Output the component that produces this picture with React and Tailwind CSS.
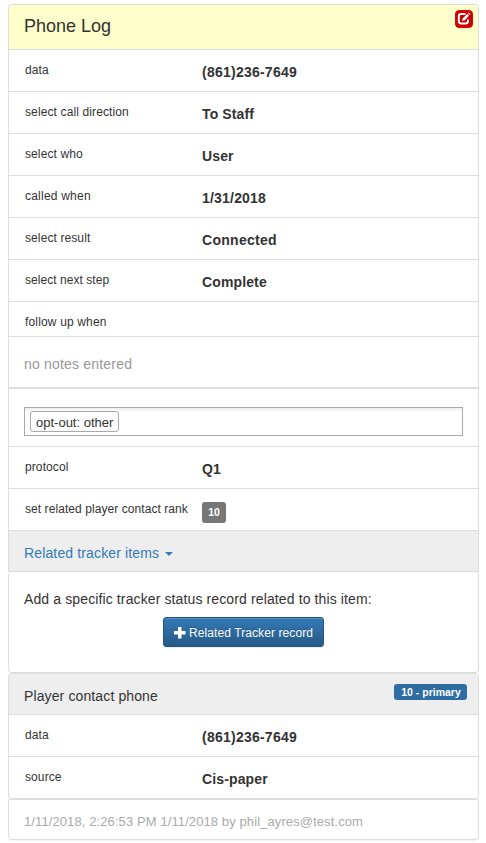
import React from "react";

function Label({ children, spacing }) {
  return (
    <div className="w-[177px] shrink-0 whitespace-nowrap pt-[12px] text-[12px] leading-[17px]">
      <span className={spacing}>{children}</span>
    </div>
  );
}

function Row({ label, value, labelSpacing = "tracking-[0.1px]", valueSpacing = "tracking-[0.13px]", last, children }) {
  return (
    <div className={"flex h-[42px] border-b border-[#ddd] pl-[16px] " + (last ? "rounded-b-[4px]" : "")}>
      <Label spacing={labelSpacing}>{label}</Label>
      {children || (
        <div className="pt-[12px] text-[14px] font-bold leading-[20px]">
          <span className={valueSpacing}>{value}</span>
        </div>
      )}
    </div>
  );
}

function EditIcon() {
  return (
    <svg className="h-[16px] w-[16px]" viewBox="1 1 16 16" fill="none">
      <path d="M10.500 4H6.200A2.400 2.400 0 0 0 3.800 6.400V11A2.400 2.400 0 0 0 6.200 13.400H10.600A2.400 2.400 0 0 0 13 11V9.500" stroke="#fff" strokeWidth="2" />
      <path d="M7.200 11L7.900 8.300L12.200 4L14 5.800L9.700 10.200Z" fill="#fff" />
      <path d="M12.900 3.300L13.700 2.500L15.500 4.200L14.700 5Z" fill="#fff" />
    </svg>
  );
}

export default function App() {
  return (
    <div className="h-[843px] w-[486px] bg-white pl-[8px] pt-[4px] font-['Liberation_Sans',Arial,sans-serif] text-[#333]">
      <div className="w-[471px] rounded-[4px] shadow-[0_1px_1px_rgba(0,0,0,0.05)]">
        <div className="rounded-t-[4px] border-x border-t border-[#ddd]">
          <div className="flex h-[45px] items-start justify-between rounded-t-[3px] border-b border-[#ddd] bg-[#ffffcc] pl-[15px] pr-[5px]">
            <h4 className="pt-[11px] text-[18px] leading-[20px]">Phone Log</h4>
            <button className="mt-[5px] h-[18px] w-[18px] rounded-[4px] border border-[#e3000a] bg-[#cc0000]">
              <EditIcon />
            </button>
          </div>
          <Row label="data" value="(861)236-7649" valueSpacing="tracking-[0.24px]" />
          <Row label="select call direction" value="To Staff" labelSpacing="tracking-[0.12px]" />
          <Row label="select who" value="User" />
          <Row label="called when" value="1/31/2018" labelSpacing="tracking-[0.22px]" valueSpacing="tracking-[0.2px]" />
          <Row label="select result" value="Connected" valueSpacing="tracking-[0.28px]" />
          <Row label="select next step" value="Complete" labelSpacing="tracking-[0.05px]" />
          <div className="flex h-[35px] border-b border-[#ddd] pl-[16px]">
            <Label spacing="tracking-[0.16px]">follow up when</Label>
          </div>
          <div className="h-[51px] border-b border-[#ddd] pl-[15px] pt-[17px] text-[14px] leading-[20px] tracking-[0.19px] text-[#999]">no notes entered</div>
          <div className="h-[59px] border-y border-[#ddd] px-[15px] pt-[18px]">
            <div className="h-[29px] w-[439px] border border-[#aaa] bg-[linear-gradient(#eee_1%,#fff_15%)] pl-[5px] pt-[3px]">
              <span className="block h-[21px] w-[89px] whitespace-nowrap rounded-[3px] border border-[#aaa] bg-white pl-[5px] text-[13px] leading-[21px]">opt-out: other</span>
            </div>
          </div>
          <Row label="protocol" value="Q1" />
          <Row label="set related player contact rank" labelSpacing="tracking-[0.07px]">
            <span className="mt-[13px] h-[21px] w-[24px] rounded-[3px] bg-[#777] text-center text-[10.5px] font-bold leading-[21px] text-white">10</span>
          </Row>
          <div className="flex h-[41px] items-center border-b border-[#ddd] bg-[#eee] pl-[15px] pt-[4px] text-[14px] tracking-[0.14px] text-[#337ab7]">
            Related tracker items
            <span className="ml-[6px] mt-[1px] border-x-4 border-t-4 border-x-transparent border-t-[#337ab7]" />
          </div>
        </div>
        <div className="h-[101px] rounded-[4px] border-x border-b border-[#ddd] pl-[15px] pt-[17px]">
          <p className="text-[14px] leading-[20px] tracking-[0.12px]">Add a specific tracker status record related to this item:</p>
          <button className="ml-[139px] mt-[8px] flex h-[30px] w-[161px] items-center rounded-[3px] border border-[#245580] bg-linear-to-b from-[#337ab7] to-[#265a88] pl-[10px] text-[12px] text-white shadow-[inset_0_1px_0_rgba(255,255,255,0.15),0_1px_1px_rgba(0,0,0,0.075)] [text-shadow:0_-1px_0_rgba(0,0,0,0.2)]">
            <svg className="mr-[3px] mt-[2px] h-[12px] w-[12px]" viewBox="0 0 12 12">
              <path d="M4 0h3.500v4h4v3.500h-4v4H4v-4H0V4h4z" fill="#fff" />
            </svg>
            <span className="whitespace-nowrap pt-[1px] tracking-[0.09px]">Related Tracker record</span>
          </button>
        </div>
        <div className="rounded-[4px] border-x border-t border-[#ddd]">
          <div className="flex h-[41px] justify-between rounded-t-[3px] border-b border-[#ddd] bg-[#eee] pl-[15px] pr-[11px]">
            <span className="pt-[12px] text-[14px] leading-[20px] tracking-[0.12px]">Player contact phone</span>
            <span className="mt-[10px] h-[16px] w-[73px] whitespace-nowrap rounded-[3px] bg-[#2e6da4] pl-[1px] text-center text-[10.5px] font-bold leading-[17px] text-white">10 - primary</span>
          </div>
          <Row label="data" value="(861)236-7649" valueSpacing="tracking-[0.24px]" />
          <Row label="source" value="Cis-paper" last />
        </div>
        <div className="h-[41px] rounded-b-[4px] border border-[#ddd] pl-[15px] pt-[13px] text-[13px] leading-[18px] tracking-[0.1px] text-[#aaa]">
          1/11/2018, 2:26:53 PM 1/11/2018 by phil_ayres@test.com
        </div>
      </div>
    </div>
  );
}
